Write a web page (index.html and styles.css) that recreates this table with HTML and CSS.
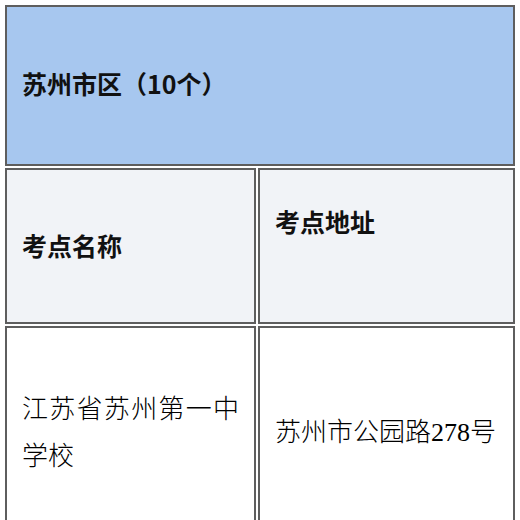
FILE: index.html
```html
<!DOCTYPE html>
<html lang="zh-CN">
<head>
<meta charset="utf-8">
<title>苏州市区考点</title>
<link rel="stylesheet" href="styles.css">
</head>
<body>
<table class="exam-table">
  <colgroup>
    <col class="col-name">
    <col class="col-addr">
  </colgroup>
  <tbody>
    <tr class="row-region">
      <td class="cell region" colspan="2">苏州市区（10个）</td>
    </tr>
    <tr class="row-head">
      <td class="cell head">考点名称</td>
      <td class="cell head head-addr">考点地址</td>
    </tr>
    <tr class="row-body">
      <td class="cell body justify">江苏省苏州第一中学校</td>
      <td class="cell body nowrap">苏州市公园路278号</td>
    </tr>
  </tbody>
</table>
</body>
</html>
```

FILE: styles.css
```css
html, body {
  margin: 0;
  padding: 0;
  background: #ffffff;
}

body {
  padding: 3px 0 0 3px;
}

.exam-table {
  table-layout: fixed;
  width: 514px;
  border-collapse: separate;
  border-spacing: 2px;
  margin: 0;
}

.col-name { width: 251px; }
.col-addr { width: 257px; }

.cell {
  box-sizing: border-box;
  border: 2px solid #5e5e5e;
  padding: 0 15px;
  vertical-align: middle;
  font-size: 26px;
  line-height: 47px;
}

.region {
  height: 161px;
  padding-bottom: 4px;
  background: #a7c7ef;
  font-family: "Noto Sans CJK SC", sans-serif;
  font-size: 25px;
  font-weight: 700;
  color: #111111;
}

.head {
  height: 156px;
  padding-bottom: 2px;
  background: #f1f3f7;
  font-family: "Noto Sans CJK SC", sans-serif;
  font-size: 25px;
  font-weight: 700;
  color: #111111;
}

.head-addr {
  padding-bottom: 49px;
}

.body {
  height: 213px;
  background: #ffffff;
  font-family: "Liberation Serif", "Noto Sans CJK SC", serif;
  font-weight: 300;
  color: #000000;
}

.justify {
  text-align: justify;
}

.nowrap {
  white-space: nowrap;
}
```
